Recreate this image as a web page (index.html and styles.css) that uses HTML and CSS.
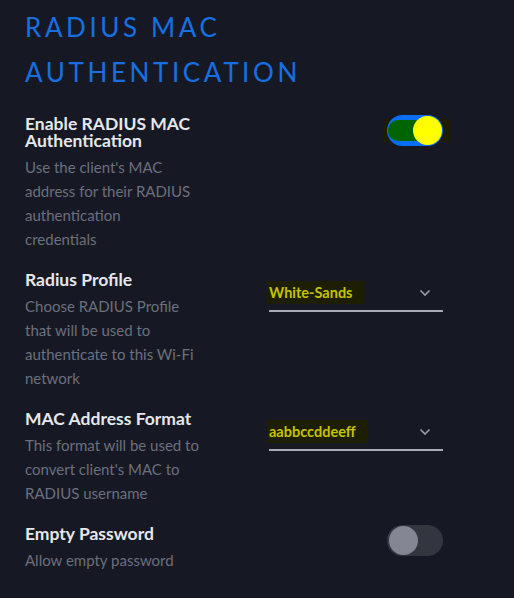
FILE: index.html
```html
<!DOCTYPE html>
<html lang="en">

<head>
    <meta charset="UTF-8">
    <meta name="viewport" content="width=device-width, initial-scale=1.0">
    <title>RADIUS MAC Authentication</title>
    <link rel="stylesheet" href="styles.css">
</head>

<body>
    <div class="panel">

        <!-- section title -->
        <h2 class="title">RADIUS MAC Authentication</h2>

        <!-- enable toggle -->
        <div class="row">
            <div class="info">
                <p class="label">Enable RADIUS MAC Authentication</p>
                <p class="desc">Use the client's MAC address for their RADIUS authentication<br>credentials</p>
            </div>
            <div class="control">
                <div class="switch switch-on">
                    <span class="mark"></span>
                    <span class="fill"></span>
                    <span class="knob"></span>
                </div>
            </div>
        </div>

        <!-- radius profile -->
        <div class="row">
            <div class="info">
                <p class="label">Radius Profile</p>
                <p class="desc">Choose RADIUS Profile that will be used to authenticate to this Wi-Fi network</p>
            </div>
            <div class="control">
                <div class="select">
                    <span class="value">White-Sands</span>
                    <svg class="chevron" width="12" height="8" viewBox="0 0 12 8">
                        <path d="M1.5 1.5 L6 6 L10.5 1.5" fill="none" stroke="#9a9ca8" stroke-width="1.6" />
                    </svg>
                </div>
            </div>
        </div>

        <!-- mac format -->
        <div class="row">
            <div class="info">
                <p class="label">MAC Address Format</p>
                <p class="desc">This format will be used to convert client's MAC to RADIUS username</p>
            </div>
            <div class="control">
                <div class="select">
                    <span class="value">aabbccddeeff</span>
                    <svg class="chevron" width="12" height="8" viewBox="0 0 12 8">
                        <path d="M1.5 1.5 L6 6 L10.5 1.5" fill="none" stroke="#9a9ca8" stroke-width="1.6" />
                    </svg>
                </div>
            </div>
        </div>

        <!-- empty password -->
        <div class="row">
            <div class="info">
                <p class="label">Empty Password</p>
                <p class="desc">Allow empty password</p>
            </div>
            <div class="control">
                <div class="switch switch-off">
                    <span class="knob"></span>
                </div>
            </div>
        </div>

    </div>
</body>

</html>
```

FILE: styles.css
```css
body {
    margin: 0;
    background: #161924;
    font-family: Lato, 'Open Sans', sans-serif;
    height: 100vh;
}

.panel {
    padding: 5px 71px 0 25px;
    display: flex;
    flex-direction: column;
    gap: 20px;
}

.title {
    margin: 0;
    color: #1670e2;
    font-weight: 400;
    font-size: 26px;
    line-height: 45px;
    letter-spacing: 3.6px;
    text-transform: uppercase;
    width: 320px;
}

.row {
    display: flex;
    justify-content: space-between;
    align-items: flex-start;
}

.info {
    width: 178px;
}

.label {
    margin: 0 0 6px;
    color: #e6e7eb;
    font-weight: 700;
    font-size: 17.5px;
    line-height: 17px;
}

.desc {
    margin: 0;
    color: #6c6f7c;
    font-size: 15px;
    line-height: 24px;
}

.control {
    width: 175px;
    display: flex;
    justify-content: flex-end;
}

/* toggles */
.switch {
    position: relative;
    width: 56px;
    height: 31px;
    border-radius: 16px;
}

.switch-on {
    background: #0a6ef2;
}

.switch-off {
    background: #33353f;
}

.mark {
    position: absolute;
    left: -4px;
    right: -7px;
    top: 4px;
    bottom: 4px;
    background: #1c1c00;
    z-index: -1;
}

.fill {
    position: absolute;
    left: 1px;
    top: 5px;
    width: 42px;
    height: 21px;
    background: #006400;
    border-radius: 10px 0 0 10px;
}

.knob {
    position: absolute;
    top: 1px;
    width: 29px;
    height: 29px;
    border-radius: 50%;
}

.switch-on .knob {
    right: 1px;
    background: #ffff00;
}

.switch-off .knob {
    left: 2px;
    background: #858694;
}

/* selects */
.select {
    margin-top: 10px;
    width: 174px;
    display: flex;
    justify-content: space-between;
    align-items: center;
    border-bottom: 2px solid #a9abb5;
    padding-bottom: 6px;
}

.value {
    background: #1d1d00;
    color: #c3c300;
    font-size: 14.5px;
    font-weight: 700;
    line-height: 23px;
    padding: 0 12px 0 2px;
    margin-left: -2px;
}

.chevron {
    margin-right: 12px;
}
```
